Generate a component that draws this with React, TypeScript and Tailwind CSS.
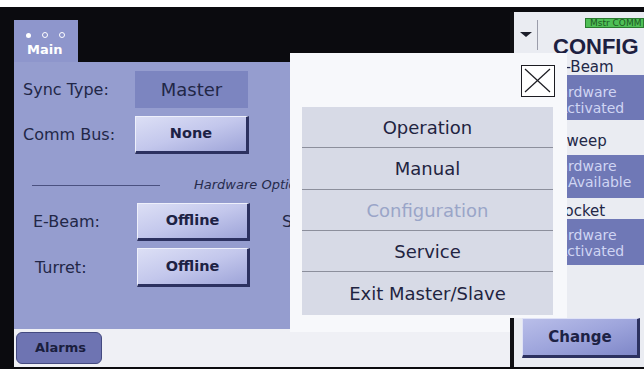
import React from "react";

const navy = "text-[#222747]";

function RaisedButton({ label, w = "w-[113px]", h = "h-[38px]" }: { label: string; w?: string; h?: string }) {
  return (
    <div
      className={`${w} ${h} shrink-0 flex items-center justify-center font-bold text-[14.5px] text-[#1d2244] bg-linear-to-br from-[#dcdff5] via-[#c3c7ec] to-[#9ea4d8] border-t border-l border-t-[#eef0fb] border-l-[#eef0fb] border-b-[3px] border-r-[3px] border-b-[#2c3160] border-r-[#2c3160]`}
    >
      {label}
    </div>
  );
}

const menuItems: { label: string; h: string; disabled?: boolean; last?: boolean }[] = [
  { label: "Operation", h: "h-[41px]" },
  { label: "Manual", h: "h-[42px]" },
  { label: "Configuration", h: "h-[41px]", disabled: true },
  { label: "Service", h: "h-[41px]" },
  { label: "Exit Master/Slave", h: "h-[43px]", last: true },
];

export default function App() {
  return (
    <div className="relative w-[644px] h-[369px] overflow-hidden bg-[#0b0b0f] flex flex-col font-['DejaVu_Sans',sans-serif]">
      <div className="h-[7px] shrink-0 bg-white" />
      <div className="flex h-[360px] shrink-0">
        {/* left bezel */}
        <div className="w-[14px] shrink-0" />
        {/* left region */}
        <div className="w-[496px] shrink-0 flex flex-col">
          <div className="h-[55px] flex items-end">
            <div className="w-[64px] h-[42px] bg-[#8e96cc] flex flex-col pl-[12px] pt-[12px]">
              <div className="flex items-center gap-[11px]">
                <div className="w-[5px] h-[5px] rounded-full bg-white" />
                <div className="w-[6px] h-[6px] rounded-full border border-white" />
                <div className="w-[6px] h-[6px] rounded-full border border-white" />
              </div>
              <div className="mt-[4px] pl-[1px] text-[13px] leading-[16px] font-bold text-white">Main</div>
            </div>
          </div>
          {/* main panel */}
          <div className="h-[267px] bg-[#959dcf] flex flex-col pt-[9px]">
            <div className="flex items-center h-[37px]">
              <div className={`w-[121px] pl-[9px] text-[16px] ${navy}`}>Sync Type:</div>
              <div className={`w-[113px] h-[37px] bg-[#7c85c0] flex items-center justify-center text-[18px] ${navy}`}>
                Master
              </div>
            </div>
            <div className="flex items-center h-[38px] mt-[8px]">
              <div className={`w-[121px] pl-[9px] text-[16px] ${navy}`}>Comm Bus:</div>
              <RaisedButton label="None" w="w-[114px]" />
            </div>
            <div className="flex items-center h-[20px] mt-[21px]">
              <div className="ml-[18px] w-[128px] h-px bg-[#4b5180]" />
              <div className="ml-[34px] italic text-[13px] text-[#262b4c]">Hardware Options</div>
            </div>
            <div className="flex items-center h-[38px] mt-[8px]">
              <div className={`w-[123px] pl-[19px] text-[16px] ${navy}`}>E-Beam:</div>
              <RaisedButton label="Offline" />
              <div className={`ml-[32px] text-[16px] ${navy}`}>Sweep:</div>
            </div>
            <div className="flex items-center h-[39px] mt-[7px]">
              <div className={`w-[123px] pl-[21px] text-[16px] ${navy}`}>Turret:</div>
              <RaisedButton label="Offline" h="h-[39px]" />
            </div>
          </div>
          {/* bottom strip */}
          <div className="h-[38px] bg-[#eff0f5] pt-[3px] pl-[2px]">
            <div className="w-[86px] h-[32px] rounded-[6px] bg-[#6e74b2] border border-[#444a80] flex items-center pl-[18px] text-[13px] font-bold text-[#1a1e3e]">
              Alarms
            </div>
          </div>
        </div>
        {/* right region */}
        <div className="flex-1 pt-[5px] flex flex-col">
          <div className="flex-1 bg-[#eaecf2] border-l-[4px] border-[#101014] flex flex-col">
            {/* header */}
            <div className="h-[45px] flex items-start">
              <svg className="ml-[6px] mt-[20px]" width="12" height="5" viewBox="0 0 12 5">
                <polygon points="0,0 12,0 6,5" fill="#1b1d2a" />
              </svg>
              <div className="ml-[5px] mt-[8px] w-px h-[30px] bg-[#9a9caa]" />
              <div className="flex-1 flex flex-col">
                <div className="self-end mt-[6px] w-[59px] h-[10px] bg-[#4fbf56] border border-[#2a7a30] text-[9px] leading-[8px] text-[#1d5a22] pl-[4px] whitespace-nowrap overflow-hidden">
                  Mstr COMM
                </div>
                <div className="ml-[15px] mt-[8px] font-['Liberation_Sans',sans-serif] font-bold text-[22px] leading-[22px] text-[#1d2040]">
                  CONFIG
                </div>
              </div>
            </div>
            {/* sections */}
            <div className={`ml-[42px] mt-[2px] text-[15px] leading-[16px] ${navy}`}>E-Beam</div>
            <div className="ml-[30px] h-[45px] bg-[#6f78b6] pt-[9px] text-[14px] leading-[16px] text-[#cfd5f3]">
              <div className="pl-[5px]">Hardware</div>
              <div className="pl-[14px]">Activated</div>
            </div>
            <div className={`ml-[43px] mt-[13px] text-[15px] leading-[16px] ${navy}`}>Sweep</div>
            <div className="ml-[30px] mt-[6px] h-[43px] bg-[#6f78b6] pt-[3px] text-[14px] leading-[16px] text-[#cfd5f3]">
              <div className="pl-[5px]">Hardware</div>
              <div className="pl-[24px]">Available</div>
            </div>
            <div className={`ml-[42px] mt-[5px] text-[15px] leading-[16px] ${navy}`}>Pocket</div>
            <div className="ml-[30px] h-[46px] bg-[#6f78b6] pt-[8px] text-[14px] leading-[16px] text-[#cfd5f3]">
              <div className="pl-[5px]">Hardware</div>
              <div className="pl-[14px]">Activated</div>
            </div>
          </div>
          {/* lower part of the right panel, drawn over the popup's corner */}
          <div className="relative z-10 h-[49px] shrink-0 bg-[#eaecf2] border-l-[4px] border-[#101014] pl-[8px]">
            <div className="w-[118px] h-[40px] flex items-center justify-center font-bold text-[15px] text-[#1d2244] bg-linear-to-br from-[#b9bee9] via-[#9ea5dc] to-[#7f87c8] border-t border-l border-t-[#dfe2f6] border-l-[#dfe2f6] border-b-[3px] border-r-[3px] border-b-[#2c3160] border-r-[#2c3160]">
              Change
            </div>
          </div>
        </div>
      </div>
      <div className="h-[2px] shrink-0" />

      {/* popup menu */}
      <div className="absolute left-[290px] top-[53px] w-[277px] h-[279px] bg-[#f7f8fb] flex flex-col pt-[12px] px-[12px]">
        <div className="flex justify-end">
          <div className="w-[34px] h-[32px] border-[1.5px] border-[#1c1c22] bg-white">
            <svg width="31" height="29" viewBox="0 0 31 29">
              <line x1="3" y1="3" x2="28" y2="26" stroke="#1c1c22" strokeWidth="1.2" />
              <line x1="28" y1="3" x2="3" y2="26" stroke="#1c1c22" strokeWidth="1.2" />
            </svg>
          </div>
        </div>
        <div className="mt-[10px] mr-[2px] flex flex-col bg-[#d7dae6]">
          {menuItems.map((m) => (
            <div
              key={m.label}
              className={`${m.h} flex items-center justify-center text-[18px] ${
                m.disabled ? "text-[#9aa5c8]" : "text-[#1f2441]"
              } ${m.last ? "" : "border-b border-[#8c8f9c]"}`}
            >
              {m.label}
            </div>
          ))}
        </div>
      </div>
    </div>
  );
}
